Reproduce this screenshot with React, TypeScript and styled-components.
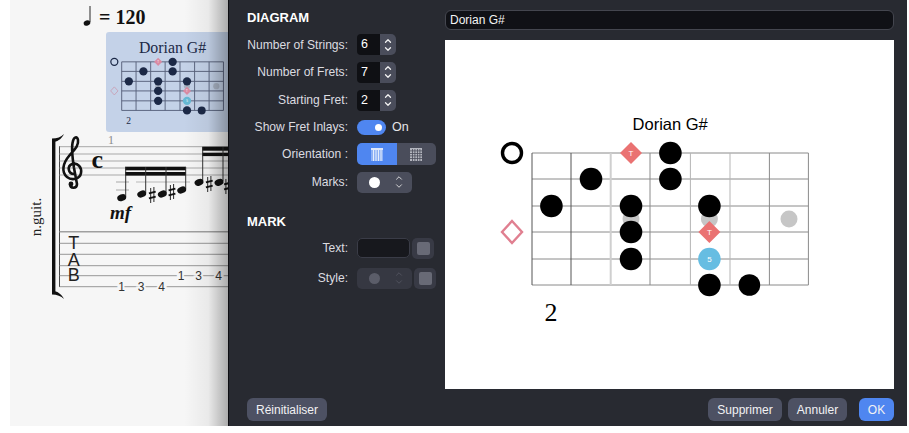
import styled, { createGlobalStyle } from "styled-components";
import { ChevronDown, ChevronUp } from "lucide-react";

const GlobalStyle = createGlobalStyle`
  html, body { margin: 0; padding: 0; background: #fff; }
  body { font-family: "Liberation Sans", Arial, sans-serif; }
`;

const FRETS = [0, 39, 78.7, 118, 158.4, 198, 237.4, 276.4];
const STRINGS = [0, 26, 53, 79, 106, 132];

type Palette = {
  ink: string;
  grid: string;
  tonic: string;
  third: string;
  inlay: string;
  outlineFill: string;
  outline: string;
  lineWidth: number;
  lightFrets: boolean;
};

const mainPalette: Palette = {
  ink: "#000",
  grid: "#8a8a8a",
  tonic: "#ea7272",
  third: "#66bde2",
  inlay: "#c6c6c6",
  outlineFill: "#fff",
  outline: "#e07f90",
  lineWidth: 1,
  lightFrets: true,
};

const thumbPalette: Palette = {
  ink: "#1c2947",
  grid: "#59627c",
  tonic: "#d98ba3",
  third: "#66b9d4",
  inlay: "#a9b3c4",
  outlineFill: "#c4d2e8",
  outline: "#c9a0b4",
  lineWidth: 2.6,
  lightFrets: false,
};

const blackDots = [
  [138.4, 0],
  [59, 26],
  [138.4, 26],
  [19.4, 53],
  [99, 53],
  [177.4, 53],
  [99, 79],
  [99, 106],
  [177.4, 132],
];

const DiagramSvg = styled.svg<{ $thumb?: boolean }>`
  display: block;
  overflow: visible;
  flex: none;
  width: ${(p) => (p.$thumb ? "129px" : "350px")};
  height: ${(p) => (p.$thumb ? "81px" : "220px")};
`;

const DiagramTitle = styled.text<{ $thumb?: boolean }>`
  font-family: ${(p) => (p.$thumb ? '"Liberation Serif", serif' : '"Liberation Sans", sans-serif')};
  font-size: ${(p) => (p.$thumb ? "43px" : "16.5px")};
  text-anchor: middle;
`;

const FretNumber = styled.text`
  font-family: "Liberation Serif", serif;
  font-size: 26px;
  text-anchor: middle;
`;

const MarkLetter = styled.text`
  font-family: "Liberation Sans", sans-serif;
  font-size: 8px;
  text-anchor: middle;
  fill: #fff;
`;

const fretColor = (i: number, p: Palette) => {
  if (!p.lightFrets) return p.grid;
  if (i === 2) return "#cfcfcf";
  if (i === 4 || i === 5) return "#b5b5b5";
  if (i === 0 || i === 1) return "#555";
  return "#8a8a8a";
};

const Diagram = ({ palette, thumb }: { palette: Palette; thumb?: boolean }) => (
  <DiagramSvg $thumb={thumb} viewBox="-37 -43 350 220">
    <DiagramTitle $thumb={thumb} x="138.2" y={thumb ? -25 : -23} fill={palette.ink}>
      Dorian G#
    </DiagramTitle>
    {STRINGS.map((y) => (
      <line key={y} x1="0" x2="276.4" y1={y} y2={y} stroke={palette.grid} strokeWidth={palette.lineWidth} />
    ))}
    {FRETS.map((x, i) => (
      <line
        key={x}
        x1={x}
        x2={x}
        y1="0"
        y2="132"
        stroke={fretColor(i, palette)}
        strokeWidth={palette.lightFrets && i === 2 ? 2 : palette.lineWidth}
      />
    ))}
    {[99, 177.4, 257].map((x) => (
      <circle key={x} cx={x} cy="66" r="8.5" fill={palette.inlay} />
    ))}
    <circle cx="-20" cy="0" r="9.5" fill="none" stroke={palette.ink} strokeWidth="3.4" />
    <path d="M-20 68 L-10 79 L-20 90 L-30 79 Z" fill={palette.outlineFill} stroke={palette.outline} strokeWidth="2.4" />
    {blackDots.map(([x, y]) => (
      <circle key={`${x}-${y}`} cx={x} cy={y} r="11.3" fill={palette.ink} />
    ))}
    <circle cx="217.4" cy="132" r="10.8" fill={palette.ink} />
    <path d="M99 -11 L110 0 L99 11 L88 0 Z" fill={palette.tonic} />
    <MarkLetter x="99" y="3">T</MarkLetter>
    <path d="M177.4 68 L188.4 79 L177.4 90 L166.4 79 Z" fill={palette.tonic} />
    <MarkLetter x="177.4" y="82">T</MarkLetter>
    <circle cx="177.4" cy="106" r="11.3" fill={palette.third} />
    <MarkLetter x="177.4" y="109">5</MarkLetter>
    <FretNumber x="19" y="168" fill={palette.ink}>2</FretNumber>
  </DiagramSvg>
);

const Frame = styled.div`
  display: flex;
  width: 897px;
  height: 426px;
  margin-left: 10px;
`;

const ScorePane = styled.div`
  position: relative;
  flex: none;
  width: 218px;
  background: #f6f6f6;
  overflow: hidden;

  &::after {
    content: "";
    position: absolute;
    top: 0;
    right: 0;
    bottom: 0;
    width: 44px;
    background: linear-gradient(to right, rgba(0, 0, 0, 0), rgba(0, 0, 0, 0.05) 55%, rgba(0, 0, 0, 0.3));
  }
`;

const ScoreSvg = styled.svg`
  position: absolute;
  inset: 0;
  width: 218px;
  height: 426px;
`;

const ThumbCard = styled.div`
  position: absolute;
  left: 96px;
  top: 32px;
  width: 122px;
  height: 100px;
  padding: 14px 0 0 2px;
  box-sizing: border-box;
  border-radius: 3px 0 0 3px;
  background: #c4d2e8;
`;

const ScoreSerif = styled.text<{ $size: number; $bold?: boolean; $italic?: boolean }>`
  font-family: "Liberation Serif", serif;
  font-size: ${(p) => p.$size}px;
  font-weight: ${(p) => (p.$bold ? 700 : 400)};
  font-style: ${(p) => (p.$italic ? "italic" : "normal")};
`;

const TabLetter = styled.text`
  font-family: "Liberation Sans", sans-serif;
  font-size: 18px;
  text-anchor: middle;
`;

const TabDigit = styled.text`
  font-family: "Liberation Sans", sans-serif;
  font-size: 12px;
  text-anchor: middle;
  dominant-baseline: central;
  paint-order: stroke;
  stroke: #f6f6f6;
  stroke-width: 4px;
`;

const Sharp = ({ x, y }: { x: number; y: number }) => (
  <g stroke="#111">
    <line x1={x - 1.6} x2={x - 1.6} y1={y - 7} y2={y + 8} strokeWidth="0.9" />
    <line x1={x + 1.6} x2={x + 1.6} y1={y - 8} y2={y + 7} strokeWidth="0.9" />
    <line x1={x - 3.4} x2={x + 3.4} y1={y - 1.6} y2={y - 3.4} strokeWidth="2" />
    <line x1={x - 3.4} x2={x + 3.4} y1={y + 3.4} y2={y + 1.6} strokeWidth="2" />
  </g>
);

const NoteHead = ({ x, y }: { x: number; y: number }) => (
  <ellipse cx={x} cy={y} rx="4.6" ry="3.3" fill="#111" transform={`rotate(-20 ${x} ${y})`} />
);

const Score = () => (
  <ScoreSvg viewBox="10 0 218 426">
    {/* tempo */}
    <ellipse cx="87" cy="23" rx="3.4" ry="2.6" fill="#111" transform="rotate(-20 87 23)" />
    <line x1="90" x2="90" y1="6" y2="22" stroke="#111" strokeWidth="0.9" />
    <ScoreSerif $size={20} $bold x="99" y="24" fill="#111">= 120</ScoreSerif>

    <ScoreSerif $size={12} x="108" y="144" fill="#8a8a8a">1</ScoreSerif>
    <ScoreSerif $size={15} transform="translate(41 217) rotate(-90)" textAnchor="middle" fill="#222">n.guit.</ScoreSerif>

    {/* bracket */}
    <rect x="52" y="141" width="3.4" height="152" fill="#111" />
    <path d="M52 141 L52 138.5 C57 138.5 61 137 64 134 C62 138 59 141 54 142 Z" fill="#111" />
    <path d="M52 292 L52 294.5 C57 294.5 61 296 64 299 C62 295 59 292 54 291 Z" fill="#111" />
    <line x1="59.5" x2="59.5" y1="146" y2="287" stroke="#333" strokeWidth="0.9" />

    {/* notation staff */}
    {[146.7, 154, 161, 168, 175].map((y) => (
      <line key={y} x1="59.5" x2="228" y1={y} y2={y} stroke="#a8a8a8" strokeWidth="1" />
    ))}
    <path
      d="M74 174 C68 174 67 166 72 164 C78 162 82 168 81 173 C80 179 72 181 67 177 C61 172 63 163 69 156 C74 150 79 146 78 140 C77 136 74 137 73 141 C71 147 72 155 74 168 L77 184 C77 189 70 189 70 184"
      fill="none"
      stroke="#111"
      strokeWidth="2.6"
    />
    <circle cx="71" cy="184" r="2.4" fill="#111" />
    <ScoreSerif $size={26} $bold x="91.5" y="168" fill="#111">c</ScoreSerif>

    {/* first beam group */}
    {[182, 190].map((y) => (
      <line key={y} x1="116" x2="129" y1={y} y2={y} stroke="#a8a8a8" strokeWidth="1" />
    ))}
    <line x1="136" x2="190" y1="182" y2="182" stroke="#b8b8b8" strokeWidth="1" />
    <rect x="125" y="166.7" width="61" height="3.6" fill="#111" />
    <rect x="125" y="172" width="61" height="3.6" fill="#111" />
    {[
      [125.7, 197],
      [145.7, 193],
      [166, 193],
      [185.7, 189],
    ].map(([x, y]) => (
      <line key={x} x1={x} x2={x} y1="167" y2={y} stroke="#333" strokeWidth="1" />
    ))}
    <NoteHead x={121.7} y={197.7} />
    <NoteHead x={141.7} y={194} />
    <NoteHead x={162.3} y={194} />
    <NoteHead x={181.7} y={190} />
    <Sharp x={152.3} y={195} />
    <Sharp x={172} y={192} />

    {/* second beam group */}
    <rect x="202.2" y="146.7" width="26" height="4" fill="#111" />
    <rect x="202.2" y="152.7" width="26" height="3.4" fill="#111" />
    <line x1="202.7" x2="202.7" y1="147" y2="181" stroke="#333" strokeWidth="1" />
    <line x1="223" x2="223" y1="147" y2="181" stroke="#333" strokeWidth="1" />
    <NoteHead x={199} y={182.3} />
    <NoteHead x={219} y={182.3} />
    <Sharp x={209.3} y={184} />
    <Sharp x={227.5} y={186} />

    <ScoreSerif $size={19} $bold $italic x="110" y="219" fill="#111">mf</ScoreSerif>

    {/* tablature */}
    <line x1="59.5" x2="228" y1="231.7" y2="231.7" stroke="#a0a0a0" strokeWidth="1.4" />
    {[243.3, 254.3, 265.7, 275.7, 286.7].map((y) => (
      <line key={y} x1="59.5" x2="228" y1={y} y2={y} stroke="#8c8c8c" strokeWidth="0.9" />
    ))}
    <TabLetter x="73.7" y="249" fill="#222">T</TabLetter>
    <TabLetter x="73.7" y="266" fill="#222">A</TabLetter>
    <TabLetter x="73.7" y="281" fill="#222">B</TabLetter>
    {[
      ["1", 121.7, 286.7],
      ["3", 141, 286.7],
      ["4", 161.7, 286.7],
      ["1", 181, 275.7],
      ["3", 198.7, 275.7],
      ["4", 218.7, 275.7],
    ].map(([n, x, y]) => (
      <TabDigit key={`${x}`} x={x} y={y} fill="#333">{n}</TabDigit>
    ))}
  </ScoreSvg>
);

const Panel = styled.div`
  flex: 1;
  display: grid;
  grid-template-columns: 198px 1fr;
  grid-template-rows: 1fr 23px;
  row-gap: 9px;
  box-sizing: border-box;
  padding: 10px 13px 5px 18px;
  background: #282a31;
  border-left: 1px solid #0e0e12;
  color: #e6e6e8;
  font-size: 12.1px;
`;

const Sidebar = styled.div`
  display: flex;
  flex-direction: column;
`;

const Heading = styled.div<{ $top: number }>`
  margin-top: ${(p) => p.$top}px;
  height: 16px;
  line-height: 16px;
  font-size: 13px;
  font-weight: 700;
  color: #fff;
`;

const Row = styled.div<{ $h: number }>`
  display: grid;
  grid-template-columns: 101px auto;
  column-gap: 9px;
  align-items: center;
  justify-content: start;
  height: ${(p) => p.$h}px;
`;

const Label = styled.label`
  text-align: right;
  white-space: nowrap;
  color: #dcdce0;
`;

const Controls = styled.div`
  display: flex;
  align-items: center;
  gap: 2px;
`;

const NumberBox = styled.div`
  width: 23px;
  height: 21px;
  box-sizing: border-box;
  padding-left: 4px;
  line-height: 21px;
  border-radius: 4px 0 0 4px;
  background: #0f1014;
  color: #fff;
  font-size: 12.5px;
`;

const StepperBox = styled.div`
  display: flex;
  flex-direction: column;
  align-items: center;
  justify-content: center;
  width: 16px;
  height: 21px;
  margin-left: -2px;
  border-radius: 0 5px 5px 0;
  background: #4a4d5b;
  color: #f2f2f2;

  svg {
    display: block;
    margin: -1px 0;
  }
`;

const Chevrons = styled.div<{ $dim?: boolean }>`
  display: flex;
  flex-direction: column;
  align-items: center;
  color: ${(p) => (p.$dim ? "#555763" : "#eee")};

  svg {
    display: block;
    margin: -1px 0;
  }
`;

const Toggle = styled.div`
  position: relative;
  width: 29px;
  height: 15px;
  border-radius: 8px;
  background: #4f86f0;

  &::after {
    content: "";
    position: absolute;
    right: 4px;
    top: 4px;
    width: 7px;
    height: 7px;
    border-radius: 50%;
    background: #fff;
  }
`;

const ToggleText = styled.span`
  margin-left: 4px;
  font-size: 12.5px;
  color: #e6e6e8;
`;

const Segmented = styled.div`
  display: flex;
  width: 79px;
  height: 22px;
  border-radius: 5px;
  overflow: hidden;
`;

const Segment = styled.div<{ $active?: boolean }>`
  flex: 1;
  display: flex;
  align-items: center;
  justify-content: center;
  background: ${(p) => (p.$active ? "#4f86f0" : "#4a4d5b")};
`;

const SelectBox = styled.div<{ $dim?: boolean }>`
  display: flex;
  align-items: center;
  justify-content: space-between;
  box-sizing: border-box;
  width: 55px;
  height: 21px;
  padding: 0 8px 0 12px;
  border-radius: 5px;
  background: ${(p) => (p.$dim ? "#363842" : "#4a4d5b")};
`;

const Dot = styled.div<{ $dim?: boolean }>`
  width: 11px;
  height: 11px;
  border-radius: 50%;
  background: ${(p) => (p.$dim ? "#5b5d69" : "#fff")};
`;

const TextField = styled.div`
  width: 53px;
  height: 20px;
  box-sizing: border-box;
  border: 1px solid #3a3c47;
  border-radius: 5px;
  background: #17181d;
`;

const SwatchButton = styled.div`
  display: flex;
  align-items: center;
  justify-content: center;
  width: 22px;
  height: 21px;
  border-radius: 5px;
  background: #383a45;

  &::after {
    content: "";
    width: 13px;
    height: 13px;
    border-radius: 2px;
    background: #686a76;
  }
`;

const Main = styled.div`
  display: flex;
  flex-direction: column;
  gap: 10px;
  min-height: 0;
`;

const TitleField = styled.div`
  flex: none;
  height: 20px;
  box-sizing: border-box;
  padding-left: 4px;
  line-height: 18px;
  border: 1px solid #44464f;
  border-radius: 6px;
  background: #101116;
  color: #f4f4f4;
  font-size: 12px;
`;

const Canvas = styled.div`
  flex: 1;
  display: flex;
  justify-content: center;
  align-items: flex-start;
  padding-top: 70px;
  background: #fff;
  overflow: hidden;
`;

const Footer = styled.div`
  grid-column: 1 / -1;
  display: flex;
  align-items: stretch;
  gap: 6px;
`;

const Button = styled.button<{ $primary?: boolean; $w: number; $gapLeft?: number }>`
  width: ${(p) => p.$w}px;
  margin-left: ${(p) => p.$gapLeft ?? 0}px;
  padding: 0;
  border: 0;
  border-radius: 6px;
  background: ${(p) => (p.$primary ? "#4f86f0" : "#4d5163")};
  color: #f2f2f4;
  font-family: inherit;
  font-size: 12px;
`;

const Spacer = styled.div`
  flex: 1;
`;

const Stepper = () => (
  <StepperBox>
    <ChevronUp size={10} strokeWidth={3} />
    <ChevronDown size={10} strokeWidth={3} />
  </StepperBox>
);

const NumberRow = ({ label, value, h }: { label: string; value: number; h: number }) => (
  <Row $h={h}>
    <Label>{label}</Label>
    <Controls>
      <NumberBox>{value}</NumberBox>
      <Stepper />
    </Controls>
  </Row>
);

const PortraitIcon = () => (
  <svg width="12" height="13" viewBox="0 0 12 13">
    <rect x="0" y="0" width="12" height="13" fill="#dfe8fb" />
    <rect x="0" y="2" width="12" height="11" fill="#8fb2f5" />
    {[2, 4.5, 7, 9.5].map((x) => (
      <rect key={x} x={x} y="2" width="1" height="11" fill="#e6eefc" />
    ))}
  </svg>
);

const GridIcon = () => (
  <svg width="12" height="13" viewBox="0 0 12 13">
    <rect x="0" y="0" width="12" height="13" fill="#b4b6bf" />
    {[2, 4.5, 7, 9.5].map((x) => (
      <rect key={x} x={x} y="1" width="0.8" height="12" fill="#4a4d5b" />
    ))}
    {[2.5, 5, 7.5, 10].map((y) => (
      <rect key={y} x="0" y={y} width="12" height="0.8" fill="#4a4d5b" />
    ))}
  </svg>
);

const SelectChevrons = ({ dim }: { dim?: boolean }) => (
  <Chevrons $dim={dim}>
    <ChevronUp size={10} strokeWidth={2} />
    <ChevronDown size={10} strokeWidth={2} />
  </Chevrons>
);

export default function App() {
  return (
    <>
      <GlobalStyle />
      <Frame>
        <ScorePane>
          <Score />
          <ThumbCard>
            <Diagram palette={thumbPalette} thumb />
          </ThumbCard>
        </ScorePane>
        <Panel>
          <Sidebar>
            <Heading $top={0}>DIAGRAM</Heading>
            <Row $h={5} />
            <NumberRow label="Number of Strings:" value={6} h={27} />
            <NumberRow label="Number of Frets:" value={7} h={28} />
            <NumberRow label="Starting Fret:" value={2} h={28} />
            <Row $h={26}>
              <Label>Show Fret Inlays:</Label>
              <Controls>
                <Toggle />
                <ToggleText>On</ToggleText>
              </Controls>
            </Row>
            <Row $h={28}>
              <Label>Orientation :</Label>
              <Segmented>
                <Segment $active>
                  <PortraitIcon />
                </Segment>
                <Segment>
                  <GridIcon />
                </Segment>
              </Segmented>
            </Row>
            <Row $h={28}>
              <Label>Marks:</Label>
              <SelectBox>
                <Dot />
                <SelectChevrons />
              </SelectBox>
            </Row>
            <Heading $top={18}>MARK</Heading>
            <Row $h={4} />
            <Row $h={28}>
              <Label>Text:</Label>
              <Controls>
                <TextField />
                <SwatchButton />
              </Controls>
            </Row>
            <Row $h={32}>
              <Label>Style:</Label>
              <Controls>
                <SelectBox $dim>
                  <Dot $dim />
                  <SelectChevrons dim />
                </SelectBox>
                <SwatchButton />
              </Controls>
            </Row>
          </Sidebar>
          <Main>
            <TitleField>Dorian G#</TitleField>
            <Canvas>
              <Diagram palette={mainPalette} />
            </Canvas>
          </Main>
          <Footer>
            <Button $w={80}>Réinitialiser</Button>
            <Spacer />
            <Button $w={74}>Supprimer</Button>
            <Button $w={59}>Annuler</Button>
            <Button $primary $w={35} $gapLeft={6}>OK</Button>
          </Footer>
        </Panel>
      </Frame>
    </>
  );
}
